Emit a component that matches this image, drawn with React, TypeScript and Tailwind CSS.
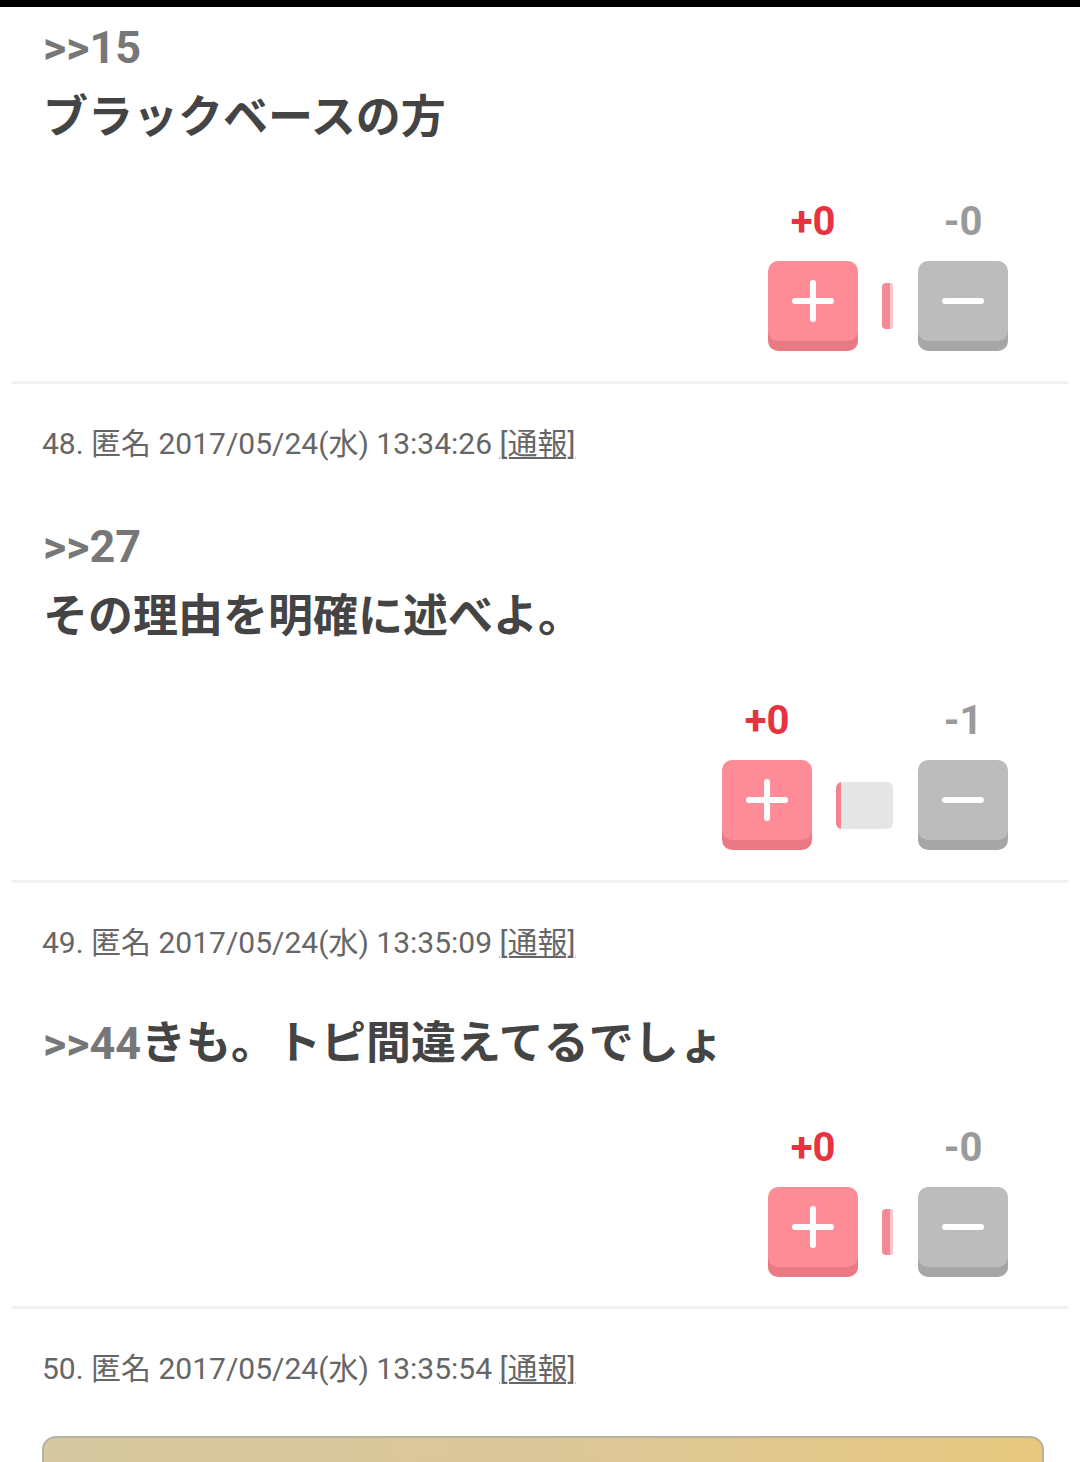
import React from "react";

const JP = { fontFamily: 'Roboto, "Noto Sans CJK JP", sans-serif' };

function Meta({ text }: { text: string }) {
  return (
    <div className="h-[40px] text-[30px] leading-[40px] text-[#666666]" style={JP}>
      {text} <span className="underline decoration-[2px] underline-offset-[3px]">[通報]</span>
    </div>
  );
}

function PlusIcon() {
  return (
    <svg width="42" height="42" viewBox="0 0 42 42">
      <rect x="0" y="18" width="42" height="6" rx="3" fill="white" />
      <rect x="18" y="0" width="6" height="42" rx="3" fill="white" />
    </svg>
  );
}

function MinusIcon() {
  return (
    <svg width="42" height="8" viewBox="0 0 42 8">
      <rect x="0" y="1" width="42" height="6" rx="3" fill="white" />
    </svg>
  );
}

function Votes({ plus, minus, wide }: { plus: string; minus: string; wide?: boolean }) {
  return (
    <div className="flex justify-end pr-[72px]" style={JP}>
      <div className="flex flex-col items-center w-[90px]">
        <div className="h-[40px] text-[40px] leading-[40px] font-bold text-[#e8323f]">{plus}</div>
        <div className="mt-[19px] h-[80px] w-[90px] rounded-[10px] bg-[#fd8c96] shadow-[0_10px_0_#e97a84] flex items-center justify-center">
          <PlusIcon />
        </div>
      </div>
      <div className="flex flex-col ml-[24px] mr-[25px]">
        <div className="h-[40px]" />
        <div className="mt-[19px] h-[90px] flex items-center">
          {wide ? (
            <div className="w-[57px] h-[47px] rounded-[6px] bg-[#e6e6e6] overflow-hidden flex">
              <div className="w-[5px] h-full bg-[#f3848f]" />
            </div>
          ) : (
            <div className="w-[11px] h-[46px] rounded-[4px] bg-[#f58a96] overflow-hidden flex justify-end">
              <div className="w-[3px] h-full bg-[#f8c6cc]" />
            </div>
          )}
        </div>
      </div>
      <div className="flex flex-col items-center w-[90px]">
        <div className="h-[40px] text-[40px] leading-[40px] font-bold text-[#9a9a9a]">{minus}</div>
        <div className="mt-[19px] h-[80px] w-[90px] rounded-[10px] bg-[#bcbcbc] shadow-[0_10px_0_#a6a6a6] flex items-center justify-center">
          <MinusIcon />
        </div>
      </div>
    </div>
  );
}

function Sep() {
  return <div className="mx-3 h-[3px] bg-[#f2f2f2]" />;
}

const anchor = "text-[#777777]";
const body = "text-[#444444]";

export default function App() {
  return (
    <div className="w-[1080px] h-[1462px] overflow-hidden bg-white">
      <div className="h-[7px] bg-black" />
      {/* Post 47 (partial) */}
      <div className="pl-[43px] pr-[44px] pt-[6px] text-[45px] leading-[70px] font-bold" style={JP}>
        <div className={anchor}>&gt;&gt;15</div>
        <div className={body}>ブラックベースの方</div>
      </div>
      <div className="mt-[49px]">
        <Votes plus="+0" minus="-0" />
      </div>
      <div className="h-[30px]" />
      <Sep />

      {/* Post 48 */}
      <div className="pl-[42px] pr-[44px] pt-[40px]">
        <Meta text="48. 匿名 2017/05/24(水) 13:34:26" />
        <div className="pl-[1px] mt-[48px] text-[45px] leading-[70px] font-bold" style={JP}>
          <div className={anchor}>&gt;&gt;27</div>
          <div className={body}>その理由を明確に述べよ。</div>
        </div>
      </div>
      <div className="mt-[49px]">
        <Votes plus="+0" minus="-1" wide />
      </div>
      <div className="h-[30px]" />
      <Sep />

      {/* Post 49 */}
      <div className="pl-[42px] pr-[44px] pt-[40px]">
        <Meta text="49. 匿名 2017/05/24(水) 13:35:09" />
        <div className="pl-[1px] mt-[46px] text-[45px] leading-[70px] font-bold" style={JP}>
          <span className={anchor}>&gt;&gt;44</span>
          <span className={body}>きも。トピ間違えてるでしょ</span>
        </div>
      </div>
      <div className="mt-[49px]">
        <Votes plus="+0" minus="-0" />
      </div>
      <div className="h-[29px]" />
      <Sep />

      {/* Post 50 */}
      <div className="pl-[42px] pr-[44px] pt-[40px]">
        <Meta text="50. 匿名 2017/05/24(水) 13:35:54" />
      </div>
      <div className="ml-[42px] mr-[36px] mt-[47px] h-[120px] rounded-t-[14px] border-2 border-[#b5b39d] bg-gradient-to-r from-[#d6c8a0] via-[#dcc79a] to-[#e8c97e]" />
    </div>
  );
}
